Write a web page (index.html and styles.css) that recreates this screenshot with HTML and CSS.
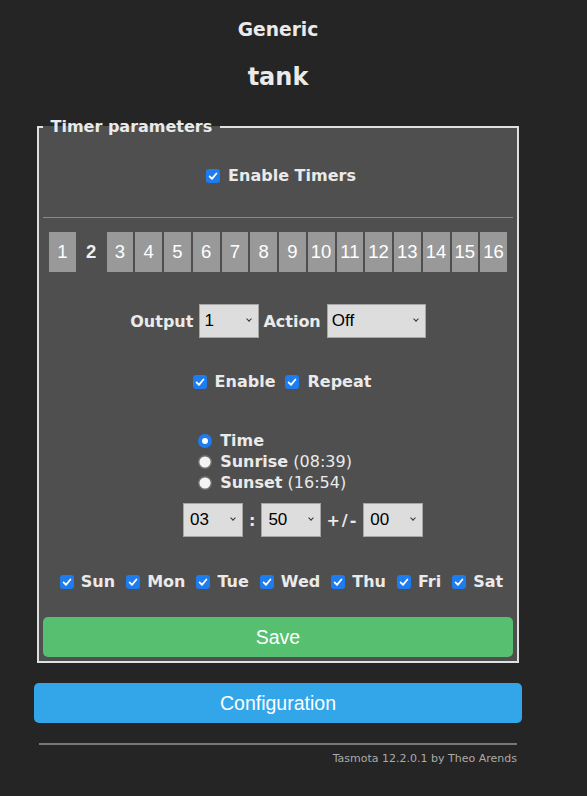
FILE: index.html
```html
<!DOCTYPE html>
<html lang="en">
<head>
<meta charset="utf-8">
<title>tank - Timers</title>
<link rel="stylesheet" href="styles.css">
</head>
<body>
<div class="page">
  <header class="head">
    <div class="module">Generic</div>
    <div class="device">tank</div>
  </header>

  <fieldset class="timers">
    <legend class="legend">Timer parameters</legend>

    <div class="row r-enable">
      <svg class="cb" viewBox="0 0 14 14" width="14" height="14"><rect width="14" height="14" rx="3" fill="#1c7cf0"/><path d="M3.6 7.4l2.4 2.5 4.4-5.4" fill="none" stroke="#fff" stroke-width="1.8" stroke-linecap="round" stroke-linejoin="round"/></svg>
      <span class="lbl">Enable Timers</span>
    </div>

    <div class="rule"></div>

    <div class="tabs">
      <button class="tab">1</button>
      <button class="tab on">2</button>
      <button class="tab">3</button>
      <button class="tab">4</button>
      <button class="tab">5</button>
      <button class="tab">6</button>
      <button class="tab">7</button>
      <button class="tab">8</button>
      <button class="tab">9</button>
      <button class="tab">10</button>
      <button class="tab">11</button>
      <button class="tab">12</button>
      <button class="tab">13</button>
      <button class="tab">14</button>
      <button class="tab">15</button>
      <button class="tab">16</button>
    </div>

    <div class="row r-output">
      <span class="lbl">Output</span>
      <span class="sel w60 gap-l6"><select class="dd"><option>1</option></select></span>
      <span class="lbl gap-l4">Action</span>
      <span class="sel w99 gap-l6"><select class="dd"><option>Off</option></select></span>
    </div>

    <div class="row r-flags">
      <svg class="cb" viewBox="0 0 14 14" width="14" height="14"><rect width="14" height="14" rx="3" fill="#1c7cf0"/><path d="M3.6 7.4l2.4 2.5 4.4-5.4" fill="none" stroke="#fff" stroke-width="1.8" stroke-linecap="round" stroke-linejoin="round"/></svg>
      <span class="lbl">Enable</span>
      <svg class="cb gap-l10" viewBox="0 0 14 14" width="14" height="14"><rect width="14" height="14" rx="3" fill="#1c7cf0"/><path d="M3.6 7.4l2.4 2.5 4.4-5.4" fill="none" stroke="#fff" stroke-width="1.8" stroke-linecap="round" stroke-linejoin="round"/></svg>
      <span class="lbl">Repeat</span>
    </div>

    <div class="radios">
      <div class="ropt">
        <svg class="rd" viewBox="0 0 14 14" width="14" height="14"><circle cx="7" cy="7" r="7" fill="#1c7cf0"/><circle cx="7" cy="7" r="3" fill="#fff"/></svg>
        <span class="lbl">Time</span>
      </div>
      <div class="ropt">
        <svg class="rd" viewBox="0 0 14 14" width="14" height="14"><circle cx="7" cy="7" r="6.3" fill="#f4f4f4" stroke="#6e6e6e" stroke-width="1.4"/></svg>
        <span><b class="lbl">Sunrise</b> (08:39)</span>
      </div>
      <div class="ropt">
        <svg class="rd" viewBox="0 0 14 14" width="14" height="14"><circle cx="7" cy="7" r="6.3" fill="#f4f4f4" stroke="#6e6e6e" stroke-width="1.4"/></svg>
        <span><b class="lbl">Sunset</b> (16:54)</span>
      </div>
    </div>

    <div class="row r-time">
      <span class="sel w60"><select class="dd dd-t"><option>03</option></select></span>
      <span class="lbl colon">:</span>
      <span class="sel w60"><select class="dd dd-t"><option>50</option></select></span>
      <span class="lbl pm">+/-</span>
      <span class="sel w60"><select class="dd dd-t"><option>00</option></select></span>
    </div>

    <div class="row r-days">
      <span class="day"><svg class="cb" viewBox="0 0 14 14" width="14" height="14"><rect width="14" height="14" rx="3" fill="#1c7cf0"/><path d="M3.6 7.4l2.4 2.5 4.4-5.4" fill="none" stroke="#fff" stroke-width="1.8" stroke-linecap="round" stroke-linejoin="round"/></svg><span class="lbl">Sun</span></span>
      <span class="day"><svg class="cb" viewBox="0 0 14 14" width="14" height="14"><rect width="14" height="14" rx="3" fill="#1c7cf0"/><path d="M3.6 7.4l2.4 2.5 4.4-5.4" fill="none" stroke="#fff" stroke-width="1.8" stroke-linecap="round" stroke-linejoin="round"/></svg><span class="lbl">Mon</span></span>
      <span class="day"><svg class="cb" viewBox="0 0 14 14" width="14" height="14"><rect width="14" height="14" rx="3" fill="#1c7cf0"/><path d="M3.6 7.4l2.4 2.5 4.4-5.4" fill="none" stroke="#fff" stroke-width="1.8" stroke-linecap="round" stroke-linejoin="round"/></svg><span class="lbl">Tue</span></span>
      <span class="day"><svg class="cb" viewBox="0 0 14 14" width="14" height="14"><rect width="14" height="14" rx="3" fill="#1c7cf0"/><path d="M3.6 7.4l2.4 2.5 4.4-5.4" fill="none" stroke="#fff" stroke-width="1.8" stroke-linecap="round" stroke-linejoin="round"/></svg><span class="lbl">Wed</span></span>
      <span class="day"><svg class="cb" viewBox="0 0 14 14" width="14" height="14"><rect width="14" height="14" rx="3" fill="#1c7cf0"/><path d="M3.6 7.4l2.4 2.5 4.4-5.4" fill="none" stroke="#fff" stroke-width="1.8" stroke-linecap="round" stroke-linejoin="round"/></svg><span class="lbl">Thu</span></span>
      <span class="day"><svg class="cb" viewBox="0 0 14 14" width="14" height="14"><rect width="14" height="14" rx="3" fill="#1c7cf0"/><path d="M3.6 7.4l2.4 2.5 4.4-5.4" fill="none" stroke="#fff" stroke-width="1.8" stroke-linecap="round" stroke-linejoin="round"/></svg><span class="lbl">Fri</span></span>
      <span class="day"><svg class="cb" viewBox="0 0 14 14" width="14" height="14"><rect width="14" height="14" rx="3" fill="#1c7cf0"/><path d="M3.6 7.4l2.4 2.5 4.4-5.4" fill="none" stroke="#fff" stroke-width="1.8" stroke-linecap="round" stroke-linejoin="round"/></svg><span class="lbl">Sat</span></span>
    </div>

    <button class="btn save">Save</button>
  </fieldset>

  <button class="btn config">Configuration</button>

  <footer class="foot">
    <div class="foot-rule"></div>
    <div class="ver">Tasmota 12.2.0.1 by Theo Arends</div>
  </footer>
</div>
</body>
</html>
```

FILE: styles.css
```css
* { box-sizing: border-box; }
html, body { margin: 0; padding: 0; }
body {
  background: #252525;
  color: #eaeaea;
  font-family: "DejaVu Sans", Verdana, sans-serif;
  font-size: 16px;
}
.page { width: 488px; margin-left: 34px; }

.head { text-align: center; padding-top: 19px; }
.module { font-size: 18.7px; font-weight: bold; line-height: 22px; }
.device { font-size: 24px; font-weight: bold; line-height: 28px; margin-top: 22px; }

.timers {
  margin: 26px 3px 0;
  padding: 0 4px 4px;
  border: 2px solid #e0e0e0;
  background: #4f4f4f;
  min-width: 0;
}
.legend {
  padding: 0 7.5px;
  font-weight: bold;
  line-height: 20px;
}

.lbl { font-weight: bold; }
.row { display: flex; align-items: center; justify-content: center; }
.cb { flex: none; display: block; margin-top: 2px; }

.r-enable { margin-top: 28px; height: 20px; padding-left: 6px; }
.r-enable .cb { margin-right: 8px; }

.rule { height: 1px; background: #8a8a8a; margin-top: 32px; }

.tabs {
  display: grid;
  grid-template-columns: repeat(16, 1fr);
  gap: 2px;
  margin: 14px 6px 0;
}
.tab {
  height: 40px;
  border: 0;
  border-radius: 0;
  padding: 0;
  margin: 0;
  background: #999999;
  color: #ffffff;
  font-family: "Liberation Sans", Arial, sans-serif;
  font-size: 18.5px;
}
.tab.on { background: transparent; font-weight: bold; color: #eeeeee; }

.r-output { margin-top: 32px; height: 34px; }
.gap-l6 { margin-left: 6px; }
.gap-l4 { margin-left: 4px; }
.gap-l10 { margin-left: 10px; }

.sel { position: relative; display: block; flex: none; height: 34px; }
.w60 { width: 60px; }
.w99 { width: 99px; }
.sel::after {
  content: "";
  position: absolute;
  right: 8px;
  top: 13px;
  width: 3px;
  height: 3px;
  border-right: 1.3px solid #333;
  border-bottom: 1.3px solid #333;
  transform: rotate(45deg);
  pointer-events: none;
}
.dd {
  -webkit-appearance: none;
  appearance: none;
  display: block;
  width: 100%;
  height: 34px;
  margin: 0;
  padding: 0 0 0 4px;
  border: 1px solid #a6a6a6;
  border-radius: 0;
  background: #dddddd;
  color: #000000;
  font-family: "Liberation Sans", Arial, sans-serif;
  font-size: 17px;
  line-height: 32px;
}
.dd-t { padding-left: 6px; }

.r-flags { margin-top: 33px; height: 20px; padding-left: 8px; }
.r-flags .cb { margin-right: 8px; }

.radios { width: fit-content; margin: 39px auto 0; padding-right: 6px; }
.ropt { display: flex; align-items: center; height: 21px; }
.rd { flex: none; display: block; margin-top: 1px; margin-right: 8px; }

.r-time { margin-top: 10px; height: 34px; justify-content: flex-start; padding-left: 140px; }
.colon { margin: 0 6px; }
.pm { margin: 0 5px; letter-spacing: 2px; }

.r-days { margin-top: 34px; height: 20px; padding-left: 7px; gap: 11px; }
.day { display: flex; align-items: center; }
.day .cb { margin-right: 7px; }

.btn {
  display: block;
  width: 100%;
  height: 40px;
  margin: 0;
  padding: 0;
  border: 0;
  border-radius: 5px;
  color: #ffffff;
  font-family: "Liberation Sans", Arial, sans-serif;
  font-size: 19.5px;
}
.save { margin-top: 26px; background: #57bf70; }
.config { margin-top: 20px; background: #32a6e8; }

.foot-rule { height: 2px; background: #777777; margin: 20px 5px 0; }
.ver {
  margin-top: 7px;
  padding-right: 5px;
  text-align: right;
  font-size: 11px;
  line-height: 13px;
  color: #aaaaaa;
}
```
